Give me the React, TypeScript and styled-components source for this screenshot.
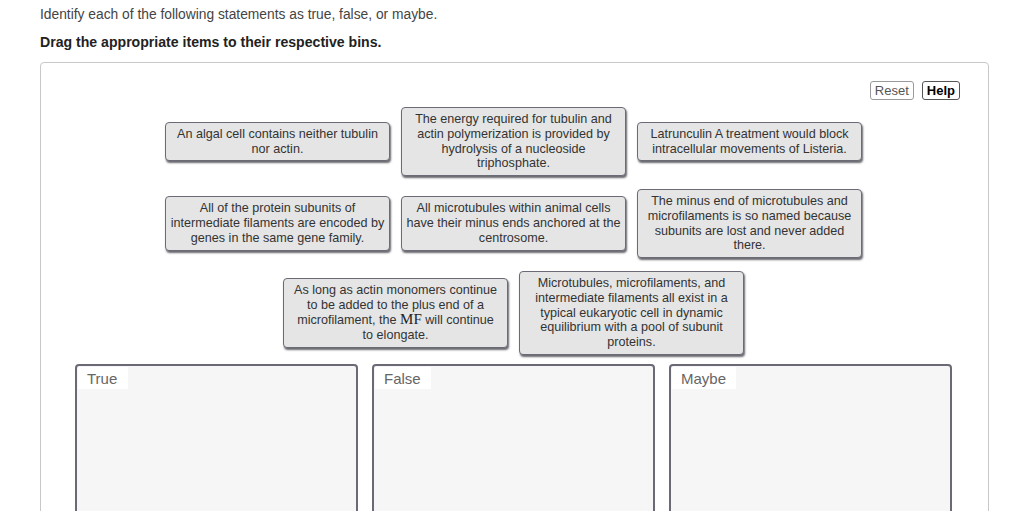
import { ReactNode } from "react";
import styled, { createGlobalStyle } from "styled-components";

type Item = {
  id: number;
  content: ReactNode;
};

type BinProps = {
  label: string;
};

const GlobalStyle = createGlobalStyle`
  html, body {
    margin: 0;
    padding: 0;
    background: #fff;
    overflow: hidden;
  }
  body {
    font-family: "Liberation Sans", Arial, sans-serif;
    color: #333;
  }
`;

const Page = styled.div`
  padding: 7px 35px 0 40px;
`;

const Instruction = styled.p`
  margin: 0;
  font-size: 13.8px;
  line-height: 16px;
  color: #444;
`;

const Prompt = styled.p`
  margin: 11px 0 0;
  font-size: 14.1px;
  line-height: 16px;
  font-weight: bold;
  color: #222;
`;

const Board = styled.section`
  margin-top: 12px;
  height: 520px;
  border: 1px solid #c8c8c8;
  border-radius: 4px;
  padding: 18px 28px 0 32px;
  box-sizing: border-box;
`;

const Toolbar = styled.div`
  display: flex;
  justify-content: flex-end;
  gap: 8px;
`;

const ToolButton = styled.button<{ $primary?: boolean }>`
  font-family: "Liberation Sans", Arial, sans-serif;
  font-size: 13px;
  font-weight: ${(props) => (props.$primary ? "bold" : "normal")};
  color: ${(props) => (props.$primary ? "#000" : "#555")};
  background: #fff;
  border: 1px solid ${(props) => (props.$primary ? "#555" : "#9a9a9a")};
  border-radius: 3px;
  padding: 1px 4px;
  height: 19px;
  line-height: 15px;
  cursor: pointer;
`;

const Pool = styled.div`
  width: 697px;
  margin: 7px auto 0;
  display: flex;
  flex-wrap: wrap;
  justify-content: center;
  align-items: center;
  column-gap: 11px;
  row-gap: 13px;
  position: relative;
  left: -3px;
`;

const Card = styled.div`
  width: 225px;
  box-sizing: border-box;
  padding: 4px;
  background: #e5e5e5;
  border: 1px solid #6b6b78;
  border-radius: 4px;
  box-shadow: 1px 2px 2px rgba(40, 40, 50, 0.7);
  font-size: 12.6px;
  line-height: 14.75px;
  text-align: center;
  color: #333;
  cursor: move;
`;

const MathText = styled.span`
  font-family: "Liberation Serif", "Times New Roman", serif;
  font-size: 15px;
  line-height: 1;
  color: #222;
`;

const Bins = styled.div`
  display: flex;
  justify-content: center;
  gap: 14px;
  margin-top: 9px;
  position: relative;
  left: -3px;
`;

const BinBox = styled.div`
  width: 283px;
  height: 220px;
  box-sizing: border-box;
  background: #f6f6f6;
  border: 2px solid #6a6a76;
  border-radius: 4px;
  padding: 1px;
`;

const BinLabel = styled.div`
  display: inline-block;
  background: #fff;
  padding: 3px 10px 2px 9px;
  min-width: 31px;
  font-size: 15px;
  line-height: 17px;
  color: #666;
`;

const items: Item[] = [
  { id: 1, content: "An algal cell contains neither tubulin nor actin." },
  {
    id: 2,
    content:
      "The energy required for tubulin and actin polymerization is provided by hydrolysis of a nucleoside triphosphate.",
  },
  { id: 3, content: "Latrunculin A treatment would block intracellular movements of Listeria." },
  {
    id: 4,
    content: "All of the protein subunits of intermediate filaments are encoded by genes in the same gene family.",
  },
  {
    id: 5,
    content: "All microtubules within animal cells have their minus ends anchored at the centrosome.",
  },
  {
    id: 6,
    content:
      "The minus end of microtubules and microfilaments is so named because subunits are lost and never added there.",
  },
  {
    id: 7,
    content: (
      <>
        As long as actin monomers continue to be added to the plus end of a microfilament, the{" "}
        <MathText>MF</MathText> will continue to{"\u00a0"}elongate.
      </>
    ),
  },
  {
    id: 8,
    content:
      "Microtubules, microfilaments, and intermediate filaments all exist in a typical eukaryotic cell in dynamic equilibrium with a pool of subunit proteins.",
  },
];

const bins = ["True", "False", "Maybe"];

const Bin = ({ label }: BinProps) => (
  <BinBox>
    <BinLabel>{label}</BinLabel>
  </BinBox>
);

const App = () => {
  return (
    <Page>
      <GlobalStyle />
      <Instruction>Identify each of the following statements as true, false, or maybe.</Instruction>
      <Prompt>Drag the appropriate items to their respective bins.</Prompt>
      <Board>
        <Toolbar>
          <ToolButton>Reset</ToolButton>
          <ToolButton $primary>Help</ToolButton>
        </Toolbar>
        <Pool>
          {items.map((item) => (
            <Card key={item.id}>{item.content}</Card>
          ))}
        </Pool>
        <Bins>
          {bins.map((bin) => (
            <Bin key={bin} label={bin} />
          ))}
        </Bins>
      </Board>
    </Page>
  );
};

export default App;
